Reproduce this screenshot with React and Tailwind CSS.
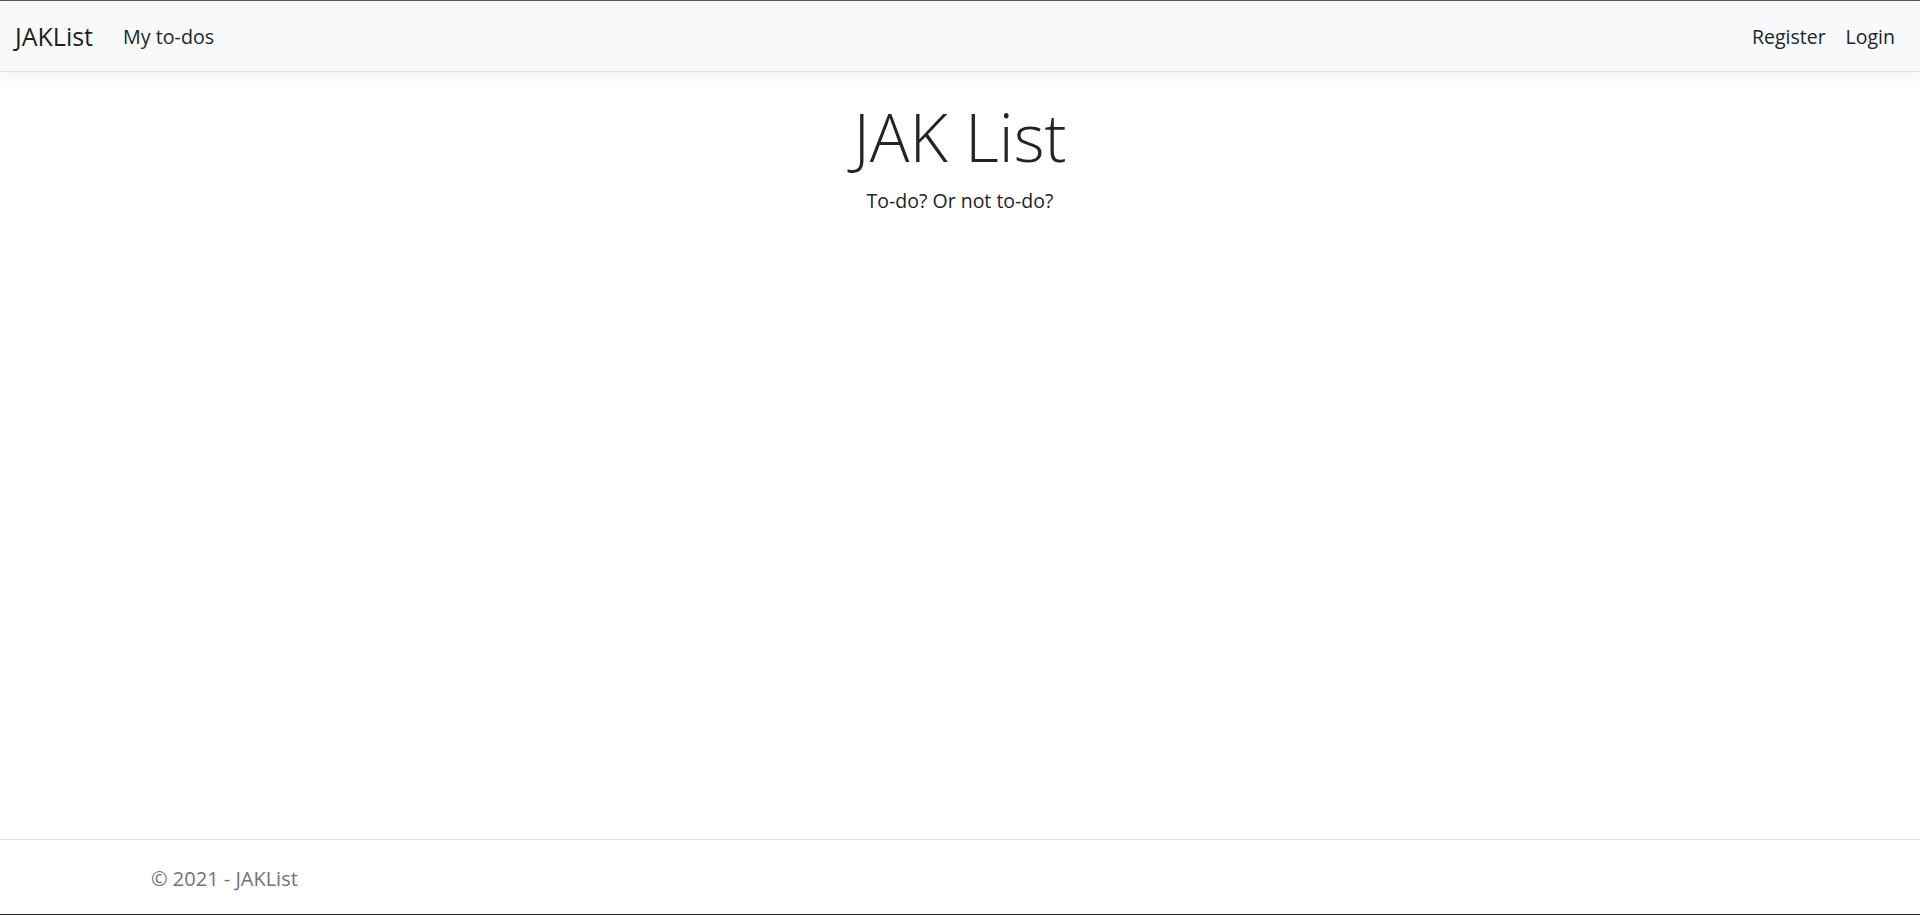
import React from 'react';

const font = { fontFamily: '"Segoe UI", "Open Sans", "Noto Sans", sans-serif' };

function NavBar() {
  return (
    <header>
      <nav className="h-[71px] pt-[2px] bg-[#f8f9fa] border-b border-[#dee2e6] shadow-[0_5px_15px_rgba(0,0,0,0.05)] flex items-center justify-between px-[15px]">
        <div className="flex items-center">
          <a href="#" className="text-[25px] text-[rgba(0,0,0,0.9)] mr-[20px] leading-[1.5]">JAKList</a>
          <a href="#" className="text-[19.7px] text-[#212529] px-[10px] leading-[1.5]">My to-dos</a>
        </div>
        <div className="flex items-center">
          <a href="#" className="text-[19.5px] text-[#212529] px-[10px] leading-[1.5]">Register</a>
          <a href="#" className="text-[19.5px] text-[#212529] px-[10px] leading-[1.5]">Login</a>
        </div>
      </nav>
    </header>
  );
}

export default function App() {
  return (
    <div style={font} className="h-[915px] flex flex-col bg-white text-[#212529] border-t border-[#5a5a5a] border-b border-b-[#222]">
      <NavBar />
      <main className="flex-1 mt-[25px] text-center">
        <h1 className="text-[66px] font-light leading-[1.2] mb-[10px]">JAK List</h1>
        <p className="text-[19.5px] leading-[1.5]">To-do? Or not to-do?</p>
      </main>
      <footer className="border-t border-[#dee2e6] h-[75px] pt-[4px] flex items-center">
        <div className="pl-[151px] text-[20px] text-[#6c757d]">© 2021 - JAKList</div>
      </footer>
    </div>
  );
}
